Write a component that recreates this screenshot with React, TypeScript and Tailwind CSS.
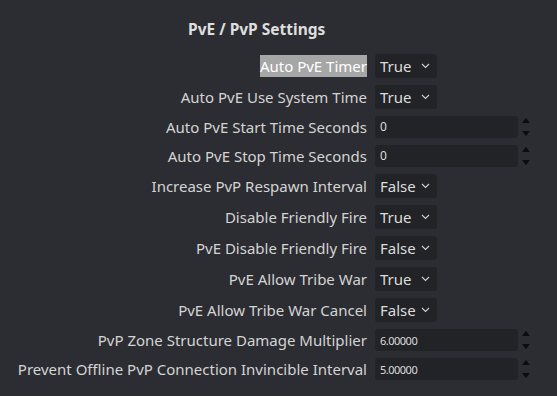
import React from 'react';

type Row =
  | { label: string; kind: 'select'; value: string; highlight?: boolean }
  | { label: string; kind: 'number'; value: string; small?: boolean };

const rows: Row[] = [
  { label: 'Auto PvE Timer', kind: 'select', value: 'True', highlight: true },
  { label: 'Auto PvE Use System Time', kind: 'select', value: 'True' },
  { label: 'Auto PvE Start Time Seconds', kind: 'number', value: '0' },
  { label: 'Auto PvE Stop Time Seconds', kind: 'number', value: '0' },
  { label: 'Increase PvP Respawn Interval', kind: 'select', value: 'False' },
  { label: 'Disable Friendly Fire', kind: 'select', value: 'True' },
  { label: 'PvE Disable Friendly Fire', kind: 'select', value: 'False' },
  { label: 'PvE Allow Tribe War', kind: 'select', value: 'True' },
  { label: 'PvE Allow Tribe War Cancel', kind: 'select', value: 'False' },
  { label: 'PvP Zone Structure Damage Multiplier', kind: 'number', value: '6.00000', small: true },
  { label: 'Prevent Offline PvP Connection Invincible Interval', kind: 'number', value: '5.00000', small: true },
];

const Chevron = () => (
  <svg width="9" height="6" viewBox="0 0 9 6" fill="none" className="text-[#d0d0d0]">
    <path d="M1 1l3.5 3.5L8 1" stroke="currentColor" strokeWidth="1.1" />
  </svg>
);

const Spinner = () => (
  <div className="flex flex-col justify-between h-[22px] w-[10px] ml-[4px] py-[2px]">
    <svg width="8" height="5" viewBox="0 0 8 5">
      <path d="M0 5L4 0l4 5z" fill="#0c0c0e" />
    </svg>
    <svg width="8" height="5" viewBox="0 0 8 5">
      <path d="M0 0h8L4 5z" fill="#0c0c0e" />
    </svg>
  </div>
);

export default function App() {
  return (
    <div
      className="w-[557px] h-[396px] bg-[#2c2d32] text-[#d4d4d4] overflow-hidden"
      style={{ fontFamily: '"Noto Sans", "Open Sans", sans-serif' }}
    >
      <div className="pt-[18px] pl-[188px] h-[54px]">
        <h1 className="text-[15.5px] font-bold leading-[22px] text-[#dedede]">PvE / PvP Settings</h1>
      </div>
      <div className="grid grid-cols-[367px_auto] gap-x-[8px] gap-y-[7px]">
        {rows.map((r) => (
          <React.Fragment key={r.label}>
            <div className="flex items-center justify-end">
              <span
                className={`text-[15px] leading-[22px] whitespace-nowrap ${
                  r.highlight ? 'bg-[#a6a6a6] text-white' : ''
                }`}
              >
                {r.label}
              </span>
            </div>
            {r.kind === 'select' ? (
              <div className="h-[24px] w-[62px] rounded-[3px] bg-[#222327] flex items-center justify-between pl-[5px] pr-[7px]">
                <span className="text-[15px] leading-none text-[#dcdcdc]">{r.value}</span>
                <Chevron />
              </div>
            ) : (
              <div className="flex items-center h-[22px]">
                <div className="h-[22px] w-[143px] rounded-[3px] bg-[#222327] flex items-center pl-[5px]">
                  <span className={`${r.small ? 'text-[11px] tracking-[-0.5px]' : 'text-[12px]'} leading-none text-[#dcdcdc]`}>
                    {r.value}
                  </span>
                </div>
                <Spinner />
              </div>
            )}
          </React.Fragment>
        ))}
      </div>
    </div>
  );
}
